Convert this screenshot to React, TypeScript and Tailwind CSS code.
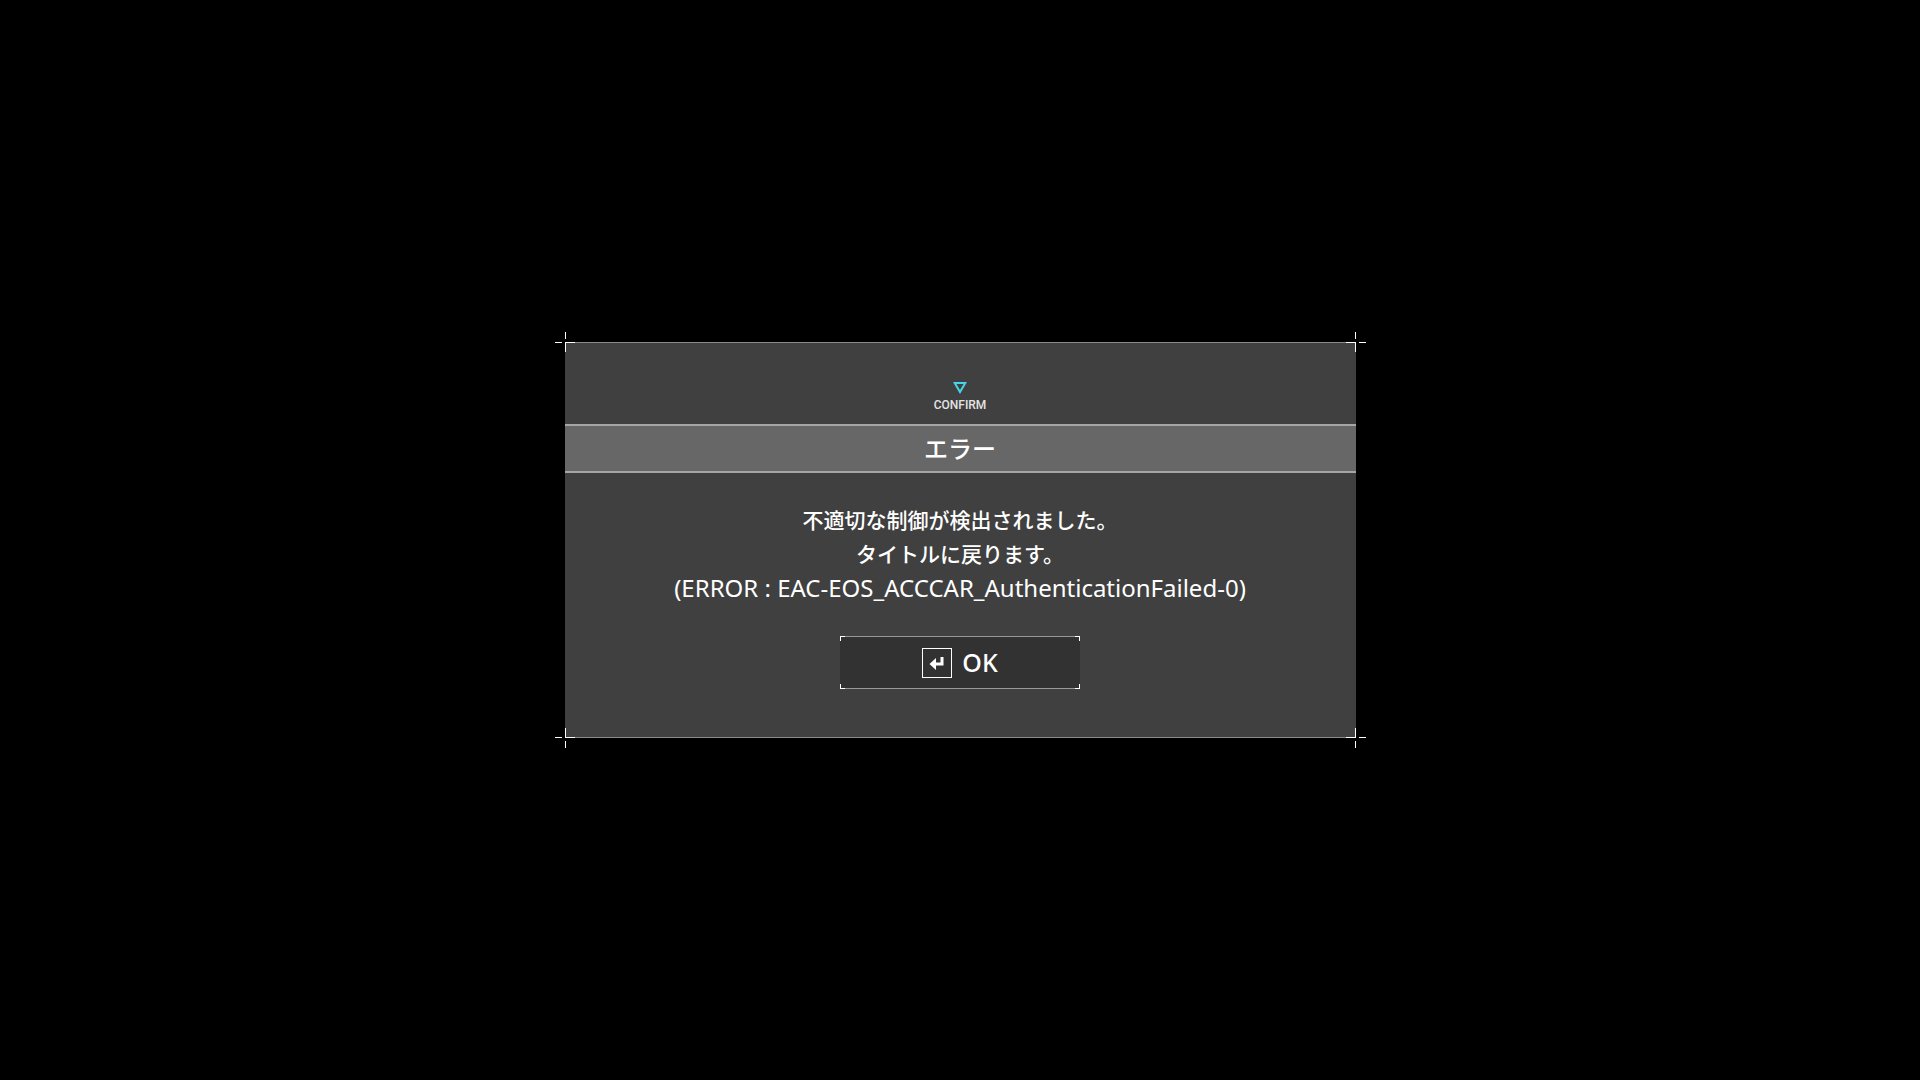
import type { ReactNode } from "react";

const panelCorners = [
  "-left-[10px] -top-[11px]",
  "-right-[10px] -top-[11px] -scale-x-100",
  "-left-[10px] -bottom-[11px] -scale-y-100",
  "-right-[10px] -bottom-[11px] -scale-100",
];

const buttonCorners = [
  "left-0 top-0 border-l border-t",
  "right-0 top-0 border-r border-t",
  "left-0 bottom-0 border-l border-b",
  "right-0 bottom-0 border-r border-b",
];

function CrossMark({ place }: { place: string }) {
  return (
    <svg
      aria-hidden="true"
      className={`absolute h-[21px] w-5 ${place}`}
      viewBox="0 0 20 21"
      fill="#ffffff"
      shapeRendering="crispEdges"
    >
      <path d="M0 10h7v1H0zM10 10h10v1H10zM10 0h1v7h-1zM10 10h1v10h-1z" />
    </svg>
  );
}

function EnterKey() {
  return (
    <span className="flex size-[30px] items-center justify-center border border-white">
      <svg aria-hidden="true" className="h-[14px] w-4" viewBox="0 0 16 14" fill="#ffffff">
        <path d="M0.5 8 7 2V6.5H11.5V1H14.5V9.5H7V14Z" />
      </svg>
    </span>
  );
}

function ActionButton({ children }: { children: ReactNode }) {
  return (
    <button
      type="button"
      className="relative flex h-[53px] w-60 items-center justify-center gap-[10px] border-y border-[#989898] bg-[#323232] text-[25px] leading-none font-medium text-white"
    >
      <span aria-hidden="true" className="absolute inset-x-0 -inset-y-px">
        {buttonCorners.map((c) => (
          <span key={c} className={`absolute size-[5px] border-white ${c}`} />
        ))}
      </span>
      <EnterKey />
      <span>{children}</span>
    </button>
  );
}

export default function App() {
  return (
    <main className="flex min-h-screen items-center justify-center bg-black font-['Noto_Sans','Noto_Sans_CJK_JP',sans-serif] text-white">
      <section
        role="alertdialog"
        aria-labelledby="dialog-title"
        aria-describedby="dialog-message"
        className="relative w-full max-w-[791px] border-y border-[#8a8a8a] bg-[#404040] pb-12"
      >
        {panelCorners.map((c) => (
          <CrossMark key={c} place={c} />
        ))}

        <header className="flex flex-col items-center pt-[39px] pb-3">
          <svg aria-hidden="true" className="h-3 w-[14px]" viewBox="0 0 14 12" fill="none" stroke="#45d5e8" strokeWidth="2">
            <path d="M1.7 1H12.3L7 10Z" />
          </svg>
          <p className="mt-1 font-['Roboto',sans-serif] text-xs leading-[14px] font-medium text-[#e4e4e4]">CONFIRM</p>
        </header>

        <h1
          id="dialog-title"
          className="border-y-2 border-[#a6a6a6] bg-[#676767] pb-[2px] text-center font-['Noto_Sans_CJK_JP',sans-serif] text-2xl leading-[43px] font-medium"
        >
          エラー
        </h1>

        <div id="dialog-message" className="pt-[29px] pb-[31px] text-center leading-[34px]">
          <p lang="ja" className="pb-px font-['Noto_Sans_CJK_JP',sans-serif] text-[21px] leading-[34px] font-medium">
            不適切な制御が検出されました。
            <br />
            タイトルに戻ります。
          </p>
          <p className="text-2xl leading-[34px]">(ERROR : EAC-EOS_ACCCAR_AuthenticationFailed-0)</p>
        </div>

        <div className="flex justify-center">
          <ActionButton>OK</ActionButton>
        </div>
      </section>
    </main>
  );
}
